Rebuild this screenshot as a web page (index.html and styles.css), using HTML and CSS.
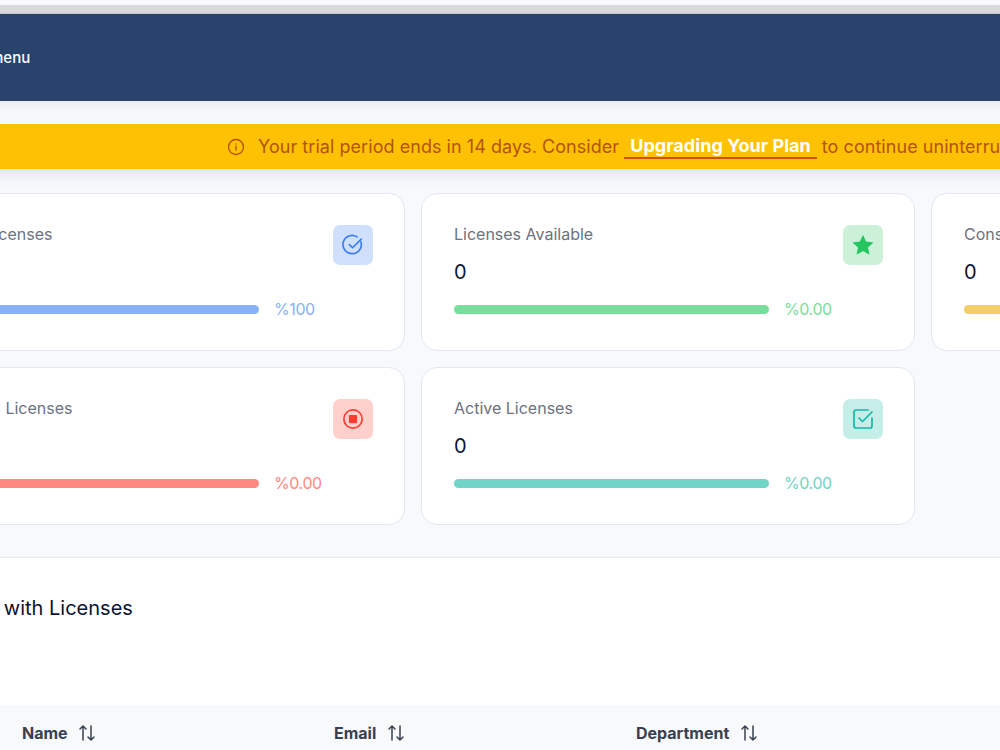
FILE: index.html
```html
<!DOCTYPE html>
<html>

<head>
  <meta http-equiv="Content-Type" content="text/html; charset=utf-8" />
  <title>Licenses</title>
  <link rel="stylesheet" href="styles.css">
</head>

<body>
  <div class="page">
    <div class="topstrip"></div>
    <header class="topbar"><span class="menu-label">Main menu</span></header>

    <div class="trial-banner">
      <svg class="trial-icon" width="18" height="18" viewBox="0 0 24 24" fill="none" stroke="currentColor" stroke-width="1.8" stroke-linecap="round">
        <circle cx="12" cy="12" r="10" />
        <path d="M12 11v5" />
        <path d="M12 7.8v.2" />
      </svg>
      <span>Your trial period ends in 14 days. Consider</span>
      <a class="upgrade-link">Upgrading Your Plan</a>
      <span>to continue uninterrupted access to all features.</span>
    </div>

    <section class="cards">
      <div class="card card-blue">
        <div class="card-body">
          <div class="card-title">Total Licenses</div>
          <div class="card-value">0</div>
          <div class="progress-row">
            <div class="progress"></div>
            <span class="progress-text">%100</span>
          </div>
        </div>
        <div class="card-icon">
          <svg width="22" height="22" viewBox="0 0 24 24" fill="none" stroke="currentColor" stroke-width="1.8" stroke-linecap="round" stroke-linejoin="round">
            <path d="M20.6 8.5A10 10 0 1 1 16.5 3.1" />
            <path d="M8 11.5l3.5 3.5L21 5.5" />
          </svg>
        </div>
      </div>

      <div class="card card-green">
        <div class="card-body">
          <div class="card-title">Licenses Available</div>
          <div class="card-value">0</div>
          <div class="progress-row">
            <div class="progress"></div>
            <span class="progress-text">%0.00</span>
          </div>
        </div>
        <div class="card-icon">
          <svg width="24" height="24" viewBox="0 0 24 24" fill="currentColor">
            <path d="M12 1.8l3.1 6.8 7.4.8-5.5 5 1.5 7.3-6.5-3.7-6.5 3.7 1.5-7.3-5.5-5 7.4-.8z" />
          </svg>
        </div>
      </div>

      <div class="card card-yellow">
        <div class="card-body">
          <div class="card-title">Consumed Licenses</div>
          <div class="card-value">0</div>
          <div class="progress-row">
            <div class="progress"></div>
            <span class="progress-text">%0.00</span>
          </div>
        </div>
      </div>

      <div class="card card-red">
        <div class="card-body">
          <div class="card-title">Expired Licenses</div>
          <div class="card-value">0</div>
          <div class="progress-row">
            <div class="progress"></div>
            <span class="progress-text">%0.00</span>
          </div>
        </div>
        <div class="card-icon">
          <svg width="22" height="22" viewBox="0 0 24 24" fill="none" stroke="currentColor" stroke-width="1.8">
            <circle cx="12" cy="12" r="10" />
            <rect x="7.5" y="7.5" width="9" height="9" rx="1.2" fill="currentColor" stroke="none" />
          </svg>
        </div>
      </div>

      <div class="card card-teal">
        <div class="card-body">
          <div class="card-title">Active Licenses</div>
          <div class="card-value">0</div>
          <div class="progress-row">
            <div class="progress"></div>
            <span class="progress-text">%0.00</span>
          </div>
        </div>
        <div class="card-icon">
          <svg width="24" height="24" viewBox="0 0 24 24" fill="none" stroke="currentColor" stroke-width="1.7" stroke-linecap="round" stroke-linejoin="round">
            <path d="M21 11v8a2 2 0 0 1-2 2H5a2 2 0 0 1-2-2V5a2 2 0 0 1 2-2h12" />
            <path d="M8 11l3.5 3.5L21 5" />
          </svg>
        </div>
      </div>
    </section>

    <section class="users">
      <h2 class="users-title">Users with Licenses</h2>
      <div class="table-head">
        <div class="th th-name">Name <svg class="sort" width="18" height="18" viewBox="0 0 18 18" fill="none" stroke="currentColor" stroke-width="1.5" stroke-linecap="round" stroke-linejoin="round"><path d="M5 16V2M2 5l3-3 3 3" /><path d="M13 2v14M10 13l3 3 3-3" /></svg></div>
        <div class="th th-email">Email <svg class="sort" width="18" height="18" viewBox="0 0 18 18" fill="none" stroke="currentColor" stroke-width="1.5" stroke-linecap="round" stroke-linejoin="round"><path d="M5 16V2M2 5l3-3 3 3" /><path d="M13 2v14M10 13l3 3 3-3" /></svg></div>
        <div class="th th-dept">Department <svg class="sort" width="18" height="18" viewBox="0 0 18 18" fill="none" stroke="currentColor" stroke-width="1.5" stroke-linecap="round" stroke-linejoin="round"><path d="M5 16V2M2 5l3-3 3 3" /><path d="M13 2v14M10 13l3 3 3-3" /></svg></div>
      </div>
    </section>
  </div>
</body>

</html>
```

FILE: styles.css
```css
html,
body {
  margin: 0;
  height: 750px;
  overflow: hidden;
  background: #f8f9fb;
}

body {
  font-family: Inter, "Liberation Sans", sans-serif;
}

/* the shot was taken scrolled sideways, so the page starts left of the window */
.page {
  width: 1600px;
  margin-left: -89px;
}

.topstrip {
  height: 5px;
  margin-left: -20px;
  border-bottom: 8px solid #d9d9de;
}

.topbar {
  display: flex;
  align-items: center;
  height: 87px;
  padding-left: 40px;
  background: #28446d;
  border-top: 1px solid #c4c5cc;
  box-shadow: 0 4px 10px rgba(40, 50, 80, 0.08);
}

.menu-label {
  color: #fff;
  font-size: 15px;
  font-weight: 500;
}

.trial-banner {
  display: flex;
  align-items: center;
  gap: 6px;
  height: 45px;
  margin-top: 23px;
  padding-left: 316px;
  background: #fec104;
  color: #b45309;
  font-size: 18px;
  letter-spacing: 0.05px;
  white-space: nowrap;
  box-shadow: 0 6px 14px rgba(40, 50, 80, 0.1);
}

.trial-icon {
  margin-right: 7px;
}

.upgrade-link {
  margin: 0 -1px;
  padding: 0 6px;
  color: #fff;
  font-weight: 700;
  font-size: 18px;
  border-bottom: 2px solid #d2500a;
  line-height: 22px;
}

.cards {
  display: grid;
  grid-template-columns: repeat(3, 494px);
  gap: 16px;
  margin-top: 24px;
}

.card {
  display: flex;
  justify-content: space-between;
  box-sizing: border-box;
  height: 158px;
  padding: 31px 31px 0 32px;
  background: #fff;
  border: 1px solid #e2e8f0;
  border-radius: 16px;
}

.card-title {
  color: #6b7280;
  font-size: 16px;
  line-height: 18px;
}

.card-value {
  margin-top: 17px;
  color: #0b1333;
  font-size: 20px;
  line-height: 24px;
}

.progress-row {
  display: flex;
  align-items: center;
  gap: 15px;
  margin-top: 15px;
}

.progress {
  width: 315px;
  height: 9px;
  border-radius: 5px;
}

.progress-text {
  font-size: 16px;
  line-height: 20px;
  letter-spacing: -0.4px;
}

.card-icon {
  display: flex;
  align-items: center;
  justify-content: center;
  width: 40px;
  height: 40px;
  border-radius: 7px;
}

.card-blue .progress { background: #88b1f8; }
.card-blue .progress-text { color: #88b1f8; }
.card-blue .card-icon { background: #d0e0fc; color: #3b7cf3; }

.card-green .progress { background: #79de9c; }
.card-green .progress-text { color: #79de9c; }
.card-green .card-icon { background: #cbf2d9; color: #22c55e; }

.card-yellow .progress { background: #f4cf69; }
.card-yellow .progress-text { color: #f4cf69; }

.card-red .progress { background: #ff8880; }
.card-red .progress-text { color: #ff8880; }
.card-red .card-icon { background: #ffd0cc; color: #ff3b30; }

.card-teal .progress { background: #70d4c6; }
.card-teal .progress-text { color: #70d4c6; }
.card-teal .card-icon { background: #c6eee8; color: #14b8a6; }

.users {
  margin-top: 32px;
  background: #fff;
  border-top: 1px solid #e2e8f0;
}

.users-title {
  margin: 0;
  padding: 38px 0 0 32px;
  color: #0b1333;
  font-size: 20px;
  line-height: 24px;
  font-weight: 400;
}

.table-head {
  display: flex;
  height: 60px;
  margin-top: 85px;
  background: #f8f9fb;
  padding-top: 16px;
  box-sizing: border-box;
}

.th {
  display: flex;
  align-items: center;
  gap: 11px;
  height: 24px;
  color: #374151;
  font-size: 16px;
  font-weight: 700;
}

.th-name {
  gap: 10px;
  width: 312px;
  padding-left: 111px;
}

.th-email {
  width: 302px;
}

.sort {
  display: block;
}
```
